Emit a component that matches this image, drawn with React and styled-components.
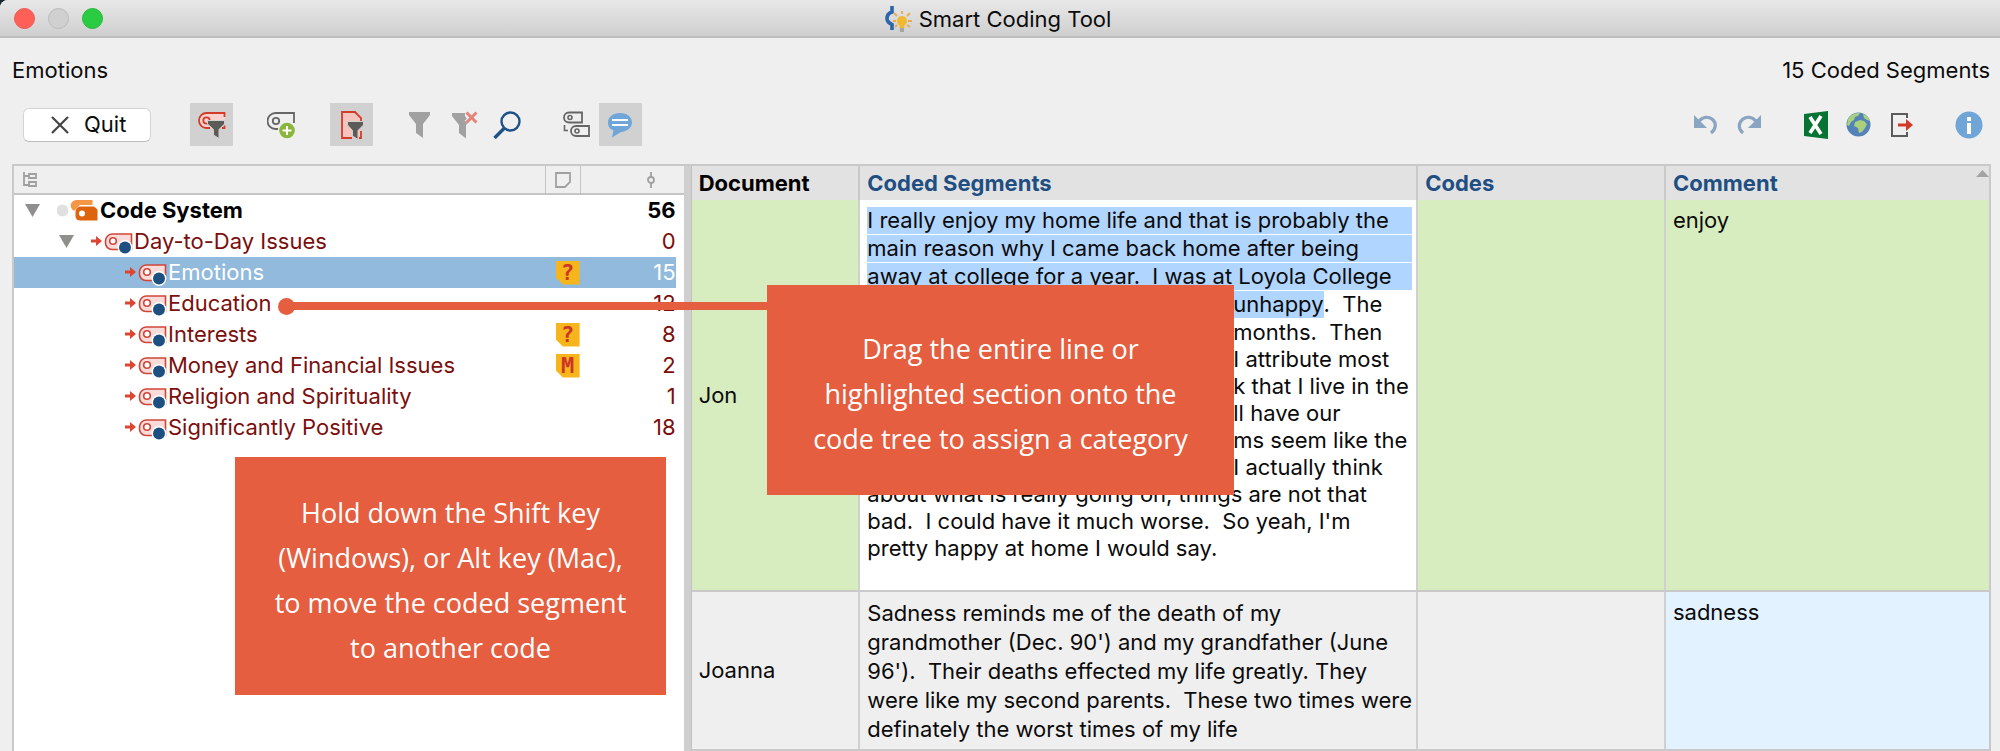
import React from 'react'
import styled, { createGlobalStyle, ThemeProvider } from 'styled-components'

const theme = {
  windowColor: '#efefef',
  lineColor: '#c9c9c9',
  codeColor: '#7a0f0d',
  headingColor: '#1f4f82',
  selectedRowColor: '#92badd',
  highlightColor: '#b0d5fe',
  activeColor: '#d7ecbf',
  commentColor: '#e2f2ff',
  calloutColor: '#e45e3f',
  pressedColor: '#d1d1d1',
  uiFont: 'Inter, "Liberation Sans", sans-serif',
  calloutFont: '"Open Sans", "Noto Sans", sans-serif',
}

const GlobalStyle = createGlobalStyle`
  * {
    box-sizing: border-box;
  }
  body {
    margin: 0;
    overflow: hidden;
    background-color: #1d2433;
    color: #0b0b0b;
    font-family: ${({ theme }) => theme.uiFont};
    font-size: 22px;
    line-height: 27px;
  }
`

const SWindow = styled.div`
  position: relative;
  display: flex;
  flex-direction: column;
  height: 100vh;
  overflow: hidden;
  background-color: ${({ theme }) => theme.windowColor};
  border-top-left-radius: 8px;
`

const STitleBar = styled.header`
  position: relative;
  display: flex;
  align-items: center;
  justify-content: center;
  height: 38px;
  flex: none;
  padding: 2px 4px 0 0;
  background: linear-gradient(#e8e8e8, #dededf 40%, #cfcfcf);
  border-bottom: 2px solid #bdbdbd;
`

const STrafficLights = styled.div`
  position: absolute;
  left: 14px;
  top: 8px;
  display: flex;
  gap: 13px;
`

const STrafficLight = styled.button`
  width: 21px;
  height: 21px;
  padding: 0;
  border: 1px solid ${({ $edge }) => $edge};
  border-radius: 50%;
  background-color: ${({ $color }) => $color};
`

const STitle = styled.h1`
  display: flex;
  align-items: center;
  gap: 6px;
  margin: 0;
  font-size: 22px;
  font-weight: 400;
`

const SSummary = styled.div`
  display: flex;
  justify-content: space-between;
  flex: none;
  padding: 18px 10px 0 12px;
  line-height: 28px;
`

const SToolbar = styled.div`
  display: flex;
  align-items: center;
  flex: none;
  padding: 19px 10px 18px 23px;
`

const SQuitButton = styled.button`
  display: flex;
  align-items: center;
  gap: 15px;
  width: 128px;
  height: 34px;
  margin-right: 12px;
  padding: 0 0 0 27px;
  border: 1px solid #d4d4d4;
  border-bottom-color: #bcbcbc;
  border-radius: 6px;
  background-color: #fff;
  color: inherit;
  font: inherit;
`

const SToolGroup = styled.div`
  display: flex;
  margin-left: ${({ $gap = 27 }) => $gap}px;
`

const SSpacer = styled.div`
  flex: 1;
`

const SToolButton = styled.button`
  display: flex;
  align-items: center;
  justify-content: center;
  width: 43px;
  height: 43px;
  padding: 0;
  border: 0;
  background-color: ${({ $pressed, theme }) => ($pressed ? theme.pressedColor : 'transparent')};
`

const SPanels = styled.main`
  display: grid;
  grid-template-columns: minmax(0, 671fr) 8px minmax(0, 1300fr);
  flex: 1;
  min-height: 0;
  margin: 0 9px 0 12px;
  border: 2px solid ${({ theme }) => theme.lineColor};
  border-width: 2px 2px 0;
`

const STree = styled.section`
  background-color: #fff;
`

const SSplitter = styled.div`
  background-color: #cfcfcf;
  border-right: 1px solid #c2c2c2;
`

const STreeHeader = styled.div`
  display: grid;
  grid-template-columns: 1fr 35px 104px;
  height: 29px;
  background-color: ${({ theme }) => theme.windowColor};
  border-bottom: 2px solid #c4c4c4;
`

const STreeHeaderCell = styled.div`
  display: flex;
  align-items: center;
  justify-content: ${({ $align = 'center' }) => $align};
  padding: 0 ${({ $inset = 8 }) => $inset}px;
  border-left: ${({ $divided }) => ($divided ? '1px solid #c4c4c4' : '0')};
`

const SCodeList = styled.ul`
  margin: 0 8px 0 0;
  padding: 0;
  list-style: none;
`

const SCodeRow = styled.li`
  display: grid;
  grid-template-columns: 1fr 34px 96px;
  align-items: center;
  height: 31px;
  padding-left: ${({ $level }) => 11 + $level * 34}px;
  background-color: ${({ $selected, theme }) => ($selected ? theme.selectedRowColor : 'transparent')};
  color: ${({ $selected, $level, theme }) => {
    if ($selected) return '#fff'
    return $level === 0 ? '#000' : theme.codeColor
  }};
  font-weight: ${({ $level }) => ($level === 0 ? 700 : 400)};
`

const SCodeName = styled.div`
  display: flex;
  align-items: center;
  white-space: nowrap;
`

const SCaretSlot = styled.span`
  display: flex;
  width: 32px;
`

const SCount = styled.div`
  text-align: right;
`

const SMemo = styled.span`
  display: flex;
  align-items: center;
  justify-content: center;
  justify-self: end;
  width: 24px;
  height: 24px;
  background-color: #f6b51b;
  clip-path: polygon(0 0, 100% 0, 100% 100%, 30% 100%, 0 70%);
  color: #cc3626;
  font-family: "DejaVu Sans Mono", monospace;
  font-size: 22px;
  font-weight: 700;
  line-height: 24px;
`

const STable = styled.table`
  width: 100%;
  table-layout: fixed;
  border-collapse: separate;
  border-spacing: 0;
`

const SCol = styled.col`
  width: ${({ $width }) => $width};
`

const SHeadCell = styled.th`
  height: 34px;
  padding: 0 0 0 7px;
  background-color: #e2e2e2;
  border-right: 2px solid ${({ theme }) => theme.lineColor};
  color: ${({ $plain, theme }) => ($plain ? '#000' : theme.headingColor)};
  font-weight: 700;
  text-align: left;
  &:last-child {
    border-right: 0;
  }
`

const SHeadContent = styled.div`
  display: flex;
  justify-content: space-between;
`

const SCell = styled.td`
  height: ${({ $height }) => $height}px;
  padding: ${({ $middle }) => ($middle ? '0 4px 0 7px' : '7px 4px 0 7px')};
  background-color: ${({ $color = 'transparent' }) => $color};
  border-right: 2px solid #d0d0d0;
  border-bottom: 2px solid ${({ theme }) => theme.lineColor};
  vertical-align: ${({ $middle }) => ($middle ? 'middle' : 'top')};
  &:last-child {
    border-right: 0;
  }
`

const SLine = styled.span`
  display: block;
  white-space: pre;
  margin-bottom: ${({ $gap }) => ($gap ? 1 : 0)}px;
  background-color: ${({ $marked, theme }) => ($marked ? theme.highlightColor : 'transparent')};
`

const SLead = styled.span`
  display: inline-block;
  width: 366px;
  text-align: right;
  vertical-align: top;
`

const SMark = styled.mark`
  display: inline-block;
  background-color: ${({ theme }) => theme.highlightColor};
  color: inherit;
`

const SParagraph = styled.p`
  margin: 0;
  line-height: 29px;
`

const SCallout = styled.aside`
  position: absolute;
  left: ${({ $left }) => $left}px;
  top: ${({ $top }) => $top}px;
  display: flex;
  align-items: center;
  justify-content: center;
  width: ${({ $width }) => $width}px;
  height: ${({ $height }) => $height}px;
  padding-top: 7px;
  background-color: ${({ theme }) => theme.calloutColor};
  color: #fff;
  font-family: ${({ theme }) => theme.calloutFont};
  font-size: 27px;
  font-weight: 500;
  line-height: 45px;
  text-align: center;
  white-space: pre-line;
`

const SPointer = styled.div`
  position: absolute;
  left: 286px;
  top: 302px;
  width: 482px;
  height: 8px;
  background-color: ${({ theme }) => theme.calloutColor};
  &::before {
    content: '';
    position: absolute;
    left: -8px;
    top: -4px;
    width: 17px;
    height: 17px;
    border-radius: 50%;
    background-color: inherit;
  }
`

const Svg = ({ w, h, children }) => (
  <svg width={w} height={h} viewBox={`0 0 ${w} ${h}`} fill="none" aria-hidden="true">
    {children}
  </svg>
)

const AppIcon = () => (
  <Svg w={28} h={28}>
    <path d="M7 1v6C4 8 2 10 2 13.500S4 18 7 19.500V25" stroke="#2a65ad" strokeWidth="3.600" />
    <path d="M17 9V6M12 11L9 8M22 11l3-3M11 16H8M23 16h4M12 20l-2 2M22 20l3 2" stroke="#e9a94f" strokeWidth="1.800" />
    <circle cx="17" cy="16" r="5" fill="#f0b92f" />
    <path d="M14.500 19h5v4h-5z" fill="#f0b92f" />
    <path d="M15 23h4v4h-4z" fill="#a5a5a5" />
  </Svg>
)

const CrossIcon = () => (
  <Svg w={18} h={18}>
    <path d="M1 1l16 16M17 1L1 17" stroke="#444" strokeWidth="2.200" />
  </Svg>
)

const CodeFilterIcon = () => (
  <Svg w={28} h={28}>
    <path d="M27 2H8.500a7.500 7.500 0 0 0 0 15H27z" fill="#f8d3cf" />
    <path d="M26.500 6V2H8.500a7.500 7.500 0 0 0 0 15H12M26.500 14.500V17H24" stroke="#d23c2a" strokeWidth="1.800" />
    <circle cx="8.500" cy="9.500" r="3.200" stroke="#d23c2a" strokeWidth="1.800" />
    <path d="M9.500 9.500h17V13l-5.500 5.500v9L15.500 24v-5.500L9.500 13z" fill="#5c5b58" stroke="#d1d1d1" />
  </Svg>
)

const AddCodeIcon = () => (
  <Svg w={30} h={28}>
    <path d="M27 12V2H8.500a7.500 7.500 0 0 0 0 16H11" stroke="#666" strokeWidth="1.800" />
    <circle cx="9" cy="10" r="3.200" stroke="#666" strokeWidth="1.800" />
    <circle cx="20" cy="19.500" r="8.800" fill="#efefef" />
    <circle cx="20" cy="19.500" r="7.800" fill="#8bb63c" />
    <path d="M20 15v9M15.500 19.500h9" stroke="#fff" strokeWidth="2" />
  </Svg>
)

const DocumentFilterIcon = () => (
  <Svg w={24} h={30}>
    <path d="M2 2h13l6 6v20H2z" fill="#f5c4be" />
    <path d="M12 28H2V2h13l6 6v3M21 21v7h-2" stroke="#d23c2a" strokeWidth="1.800" />
    <path d="M7.500 11.500H23.500V15l-5.500 5.500v9L12.500 26v-5.500L7.500 15z" fill="#5c5b58" stroke="#d1d1d1" />
  </Svg>
)

const FilterIcon = () => (
  <Svg w={25} h={26}>
    <path d="M0 0h21v3l-7 9v14l-7-5v-9L0 3z" fill="#a1a1a1" />
  </Svg>
)

const ClearFilterIcon = () => (
  <Svg w={26} h={28}>
    <path d="M0 2h13v3l4 6-3 3v13.500l-7-5.500v-8L0 5z" fill="#a1a1a1" />
    <path d="M14.500 1.500l10 10M24.500 1.500l-10 10" stroke="#efefef" strokeWidth="5" />
    <path d="M14.500 1.500l10 10M24.500 1.500l-10 10" stroke="#e5837a" strokeWidth="3" />
  </Svg>
)

const SearchIcon = () => (
  <Svg w={30} h={28}>
    <circle cx="17.500" cy="10.500" r="9" stroke="#1d5288" strokeWidth="2.400" />
    <path d="M11.500 17L1.500 27" stroke="#1d5288" strokeWidth="3.400" />
  </Svg>
)

const CodesColumnIcon = () => (
  <Svg w={29} h={27}>
    <path d="M6 1.500h13v10H6a5 5 0 0 1 0-10z" stroke="#666" strokeWidth="1.800" />
    <circle cx="7" cy="6.500" r="2" stroke="#666" strokeWidth="1.600" />
    <path d="M13 15h13v10H13a5 5 0 0 1 0-10z" stroke="#666" strokeWidth="1.800" />
    <circle cx="14" cy="20" r="2" stroke="#666" strokeWidth="1.600" />
    <path d="M1.500 14v5.500H5" stroke="#666" strokeWidth="1.600" />
  </Svg>
)

const CommentIcon = () => (
  <Svg w={28} h={26}>
    <path d="M13 1c7 0 12 4 12 9.500 0 5-5 9-11 9.500L5 25.500l1.500-7C2.500 17 1 14 1 10.500 1 5 6 1 13 1z" fill="#70a5d8" />
    <path d="M5 8h16M5 13h16" stroke="#fff" strokeWidth="2" />
  </Svg>
)

const UndoIcon = () => (
  <Svg w={24} h={22}>
    <path d="M0 1v13h13z" fill="#8aa5c1" />
    <path d="M5 7c4-4 9-5 13-2 5 4 4 10-1 14" stroke="#8aa5c1" strokeWidth="3.200" />
  </Svg>
)

const RedoIcon = () => (
  <Svg w={24} h={22}>
    <path d="M24 1v13H11z" fill="#8aa5c1" />
    <path d="M19 7c-4-4-9-5-13-2-5 4-5 10 0 14" stroke="#8aa5c1" strokeWidth="3.200" />
  </Svg>
)

const ExcelIcon = () => (
  <Svg w={24} h={28}>
    <path d="M0 3l24-3v28L0 25z" fill="#067433" />
    <path d="M6 6l11 17M17 5L6 22" stroke="#fff" strokeWidth="3.600" />
  </Svg>
)

const GlobeIcon = () => (
  <Svg w={25} h={25}>
    <circle cx="12.500" cy="12.500" r="12" fill="#5382b8" />
    <path d="M2 7C5 2 9 1 14 1l-2 3-3 1-1 3-3 2-2 4-2-1z" fill="#a9d07c" />
    <path d="M17 2c4 1 6 4 7 7l-3-1-3-2z" fill="#a9d07c" />
    <path d="M9 10l5-2 4 1 3 3-2 4-3 4-3 1-1-5-4-2z" fill="#a9d07c" />
  </Svg>
)

const ExportIcon = () => (
  <Svg w={24} h={26}>
    <path d="M17 6V2H2v22h15v-4" stroke="#5b5b5b" strokeWidth="2" />
    <path d="M8 11.500h8V7l7 6-7 6v-4.500H8z" fill="#d13a29" />
  </Svg>
)

const InfoIcon = () => (
  <Svg w={28} h={28}>
    <circle cx="14" cy="14" r="13.500" fill="#70a5d8" />
    <path d="M12 6h4v4h-4zM12 12h4v11h-4z" fill="#fff" />
  </Svg>
)

const TreeIcon = () => (
  <Svg w={16} h={18}>
    <path d="M2 1v13h5M2 5h5" stroke="#a0a0a0" strokeWidth="1.800" />
    <path d="M7 3h7v4H7zM7 11h7v4H7z" stroke="#a0a0a0" strokeWidth="1.800" />
  </Svg>
)

const MemoIcon = () => (
  <Svg w={16} h={16}>
    <path d="M1 1h14v9l-5 5H1z" stroke="#a0a0a0" strokeWidth="1.800" />
  </Svg>
)

const NodeIcon = () => (
  <Svg w={10} h={16}>
    <circle cx="5" cy="8" r="3" stroke="#a0a0a0" strokeWidth="1.800" />
    <path d="M5 0v5M5 11v5" stroke="#a0a0a0" strokeWidth="1.800" />
  </Svg>
)

const CaretIcon = () => (
  <Svg w={15} h={13}>
    <path d="M0 0h15L7.500 13z" fill="#918e8e" />
  </Svg>
)

const CodeSystemIcon = () => (
  <Svg w={43} h={31}>
    <circle cx="5.500" cy="15.500" r="6" fill="#e0e0e2" />
    <path d="M35.500 5v5H23l-6 6c-3-2-4-5-3-7 1-3 3-4 6-4z" fill="#f59645" />
    <path d="M23 11.500h14l3.500 3v11H23a4.500 4.500 0 0 1-4.500-4.500v-4a6 6 0 0 1 4.500-5.500z" fill="#dd640c" />
    <circle cx="25" cy="18.500" r="3" fill="#fff" />
  </Svg>
)

const CodeIcon = () => (
  <Svg w={43} h={31}>
    <path d="M0 13.500h5V10l6 5-6 5v-3.500H0z" fill="#dd4630" />
    <path d="M40.500 8v15.500H21a6.500 6.500 0 0 1-6.500-6.500v-2A7 7 0 0 1 21 8z" fill="#f9dcda" stroke="#cf4539" strokeWidth="1.600" />
    <circle cx="22" cy="15" r="3.300" fill="#fff" stroke="#cf4539" strokeWidth="1.600" />
    <circle cx="34" cy="21.500" r="7.500" fill="#fff" />
    <circle cx="34" cy="21.500" r="6" fill="#1d5080" />
  </Svg>
)

const ScrollUpIcon = () => (
  <Svg w={13} h={7}>
    <path d="M0 7l6.500-7L13 7z" fill="#a3a3a3" />
  </Svg>
)

const leftTools = [
  [{ label: 'Filter codes', icon: CodeFilterIcon, pressed: true }],
  [{ label: 'New code', icon: AddCodeIcon }],
  [{ label: 'Filter documents', icon: DocumentFilterIcon, pressed: true }],
  [
    { label: 'Filter', icon: FilterIcon },
    { label: 'Reset filters', icon: ClearFilterIcon },
    { label: 'Search', icon: SearchIcon },
  ],
  [
    { label: 'Show codes', icon: CodesColumnIcon },
    { label: 'Show comments', icon: CommentIcon, pressed: true },
  ],
]

const rightTools = [
  [
    { label: 'Undo', icon: UndoIcon },
    { label: 'Redo', icon: RedoIcon },
  ],
  [
    { label: 'Open as Excel table', icon: ExcelIcon },
    { label: 'Open as web page', icon: GlobeIcon },
    { label: 'Export', icon: ExportIcon },
  ],
  [{ label: 'Help', icon: InfoIcon }],
]

const codes = [
  { name: 'Code System', count: 56, level: 0, open: true },
  { name: 'Day-to-Day Issues', count: 0, level: 1, open: true },
  { name: 'Emotions', count: 15, level: 2, memo: '?', selected: true },
  { name: 'Education', count: 12, level: 2 },
  { name: 'Interests', count: 8, level: 2, memo: '?' },
  { name: 'Money and Financial Issues', count: 2, level: 2, memo: 'M' },
  { name: 'Religion and Spirituality', count: 1, level: 2 },
  { name: 'Significantly Positive', count: 18, level: 2 },
]

const ToolGroups = ({ groups, gap }) =>
  groups.map((tools) => (
    <SToolGroup key={tools[0].label} $gap={gap}>
      {tools.map(({ label, icon: Icon, pressed }) => (
        <SToolButton key={label} aria-label={label} aria-pressed={pressed} $pressed={pressed}>
          <Icon />
        </SToolButton>
      ))}
    </SToolGroup>
  ))

const CodeTree = () => (
  <STree>
    <STreeHeader>
      <STreeHeaderCell $align="flex-start"><TreeIcon /></STreeHeaderCell>
      <STreeHeaderCell $divided><MemoIcon /></STreeHeaderCell>
      <STreeHeaderCell $divided $align="flex-end" $inset={28}><NodeIcon /></STreeHeaderCell>
    </STreeHeader>
    <SCodeList>
      {codes.map(({ name, count, level, memo, open, selected }) => (
        <SCodeRow key={name} $level={level} $selected={selected}>
          <SCodeName>
            <SCaretSlot>{open && <CaretIcon />}</SCaretSlot>
            {level === 0 ? <CodeSystemIcon /> : <CodeIcon />}
            {name}
          </SCodeName>
          {memo ? <SMemo>{memo}</SMemo> : <span />}
          <SCount>{count}</SCount>
        </SCodeRow>
      ))}
    </SCodeList>
  </STree>
)

const JonSegment = () => (
  <>
    <SLine $marked $gap>I really enjoy my home life and that is probably the</SLine>
    <SLine $marked $gap>main reason why I came back home after being</SLine>
    <SLine $marked $gap>away at college for a year.  I was at Loyola College</SLine>
    <SLine $gap><SMark><SLead> </SLead>unhappy</SMark>.  The</SLine>
    <SLine><SLead />months.  Then</SLine>
    <SLine><SLead />I attribute most</SLine>
    <SLine><SLead>thin</SLead>k that I live in the</SLine>
    <SLine><SLead>a</SLead>ll have our</SLine>
    <SLine><SLead>proble</SLead>ms seem like the</SLine>
    <SLine><SLead />I actually think</SLine>
    <SLine>about what is really going on, things are not that</SLine>
    <SLine>bad.  I could have it much worse.  So yeah, I'm</SLine>
    <SLine>pretty happy at home I would say.</SLine>
  </>
)

const SegmentTable = () => (
  <STable>
    <colgroup>
      <SCol $width="13%" />
      <SCol $width="43%" />
      <SCol $width="19.1%" />
      <SCol />
    </colgroup>
    <thead>
      <tr>
        <SHeadCell $plain>Document</SHeadCell>
        <SHeadCell>Coded Segments</SHeadCell>
        <SHeadCell>Codes</SHeadCell>
        <SHeadCell>
          <SHeadContent>Comment<ScrollUpIcon /></SHeadContent>
        </SHeadCell>
      </tr>
    </thead>
    <tbody>
      <tr>
        <SCell $height={391} $color={theme.activeColor} $middle>Jon</SCell>
        <SCell $color="#fff"><JonSegment /></SCell>
        <SCell $color={theme.activeColor} />
        <SCell $color={theme.activeColor}>enjoy</SCell>
      </tr>
      <tr>
        <SCell $height={158} $middle>Joanna</SCell>
        <SCell>
          <SParagraph>
            Sadness reminds me of the death of my<br />
            grandmother (Dec. 90') and my grandfather (June<br />
            96').&nbsp; Their deaths effected my life greatly. They<br />
            were like my second parents.&nbsp; These two times were<br />
            definately the worst times of my life
          </SParagraph>
        </SCell>
        <SCell />
        <SCell $color={theme.commentColor}>sadness</SCell>
      </tr>
    </tbody>
  </STable>
)

const App = () => (
  <ThemeProvider theme={theme}>
    <GlobalStyle />
    <SWindow>
      <STitleBar>
        <STrafficLights>
          <STrafficLight aria-label="Close" $color="#fe5f57" $edge="#ee5850" />
          <STrafficLight aria-label="Minimize" $color="#d0d0d0" $edge="#bababa" />
          <STrafficLight aria-label="Zoom" $color="#2bcb42" $edge="#27b83b" />
        </STrafficLights>
        <STitle><AppIcon />Smart Coding Tool</STitle>
      </STitleBar>
      <SSummary>
        <span>Emotions</span>
        <span>15 Coded Segments</span>
      </SSummary>
      <SToolbar>
        <SQuitButton><CrossIcon />Quit</SQuitButton>
        <ToolGroups groups={leftTools} />
        <SSpacer />
        <ToolGroups groups={rightTools} gap={24} />
      </SToolbar>
      <SPanels>
        <CodeTree />
        <SSplitter />
        <SegmentTable />
      </SPanels>
      <SPointer />
      <SCallout $left={767} $top={285} $width={467} $height={210}>
        {'Drag the entire line or\nhighlighted section onto the\ncode tree to assign a category'}
      </SCallout>
      <SCallout $left={235} $top={457} $width={431} $height={238}>
        {'Hold down the Shift key\n(Windows), or Alt key (Mac),\nto move the coded segment\nto another code'}
      </SCallout>
    </SWindow>
  </ThemeProvider>
)

export default App
